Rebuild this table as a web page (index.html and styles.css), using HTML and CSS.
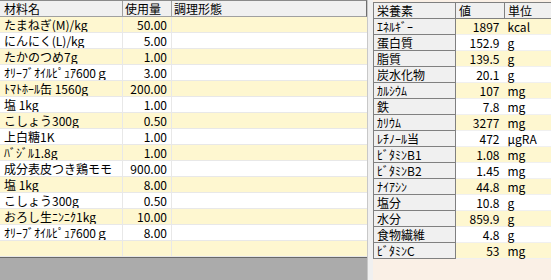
FILE: index.html
```html
<!DOCTYPE html>
<html lang="ja">
<head>
<meta charset="utf-8">
<link rel="stylesheet" href="styles.css">
</head>
<body>
<div class="app">
  <div class="left">
    <div class="grid">
      <div class="row head"><div class="c name">材料名</div><div class="c qty">使用量</div><div class="c form">調理形態</div></div>
      <div class="row y"><div class="c name">たまねぎ(M)/kg</div><div class="c qty">50.00</div><div class="c form"></div></div>
      <div class="row"><div class="c name">にんにく(L)/kg</div><div class="c qty">5.00</div><div class="c form"></div></div>
      <div class="row y"><div class="c name">たかのつめ7g</div><div class="c qty">1.00</div><div class="c form"></div></div>
      <div class="row"><div class="c name">ｵﾘｰﾌﾞｵｲﾙﾋﾟｭｱ600ｇ</div><div class="c qty">3.00</div><div class="c form"></div></div>
      <div class="row y"><div class="c name">ﾄﾏﾄﾎｰﾙ缶 1560g</div><div class="c qty">200.00</div><div class="c form"></div></div>
      <div class="row"><div class="c name">塩 1kg</div><div class="c qty">1.00</div><div class="c form"></div></div>
      <div class="row y"><div class="c name">こしょう300g</div><div class="c qty">0.50</div><div class="c form"></div></div>
      <div class="row"><div class="c name">上白糖1K</div><div class="c qty">1.00</div><div class="c form"></div></div>
      <div class="row y"><div class="c name">ﾊﾞｼﾞﾙ1.8g</div><div class="c qty">1.00</div><div class="c form"></div></div>
      <div class="row"><div class="c name">成分表皮つき鶏モモ</div><div class="c qty">900.00</div><div class="c form"></div></div>
      <div class="row y"><div class="c name">塩 1kg</div><div class="c qty">8.00</div><div class="c form"></div></div>
      <div class="row"><div class="c name">こしょう300g</div><div class="c qty">0.50</div><div class="c form"></div></div>
      <div class="row y"><div class="c name">おろし生ﾆﾝﾆｸ1kg</div><div class="c qty">10.00</div><div class="c form"></div></div>
      <div class="row"><div class="c name">ｵﾘｰﾌﾞｵｲﾙﾋﾟｭｱ600ｇ</div><div class="c qty">8.00</div><div class="c form"></div></div>
      <div class="row y"><div class="c name"></div><div class="c qty"></div><div class="c form"></div></div>
    </div>
    <div class="blank"></div>
  </div>
  <div class="splitter"></div>
  <div class="right">
    <table class="nut">
      <tr class="nhead"><th class="k">栄養素</th><th class="v">値</th><th class="u">単位</th></tr>
      <tr class="y"><th class="k">ｴﾈﾙｷﾞｰ</th><td class="v">1897</td><td class="u">kcal</td></tr>
      <tr><th class="k">蛋白質</th><td class="v">152.9</td><td class="u">g</td></tr>
      <tr class="y"><th class="k">脂質</th><td class="v">139.5</td><td class="u">g</td></tr>
      <tr><th class="k">炭水化物</th><td class="v">20.1</td><td class="u">g</td></tr>
      <tr class="y"><th class="k">ｶﾙｼｳﾑ</th><td class="v">107</td><td class="u">mg</td></tr>
      <tr><th class="k">鉄</th><td class="v">7.8</td><td class="u">mg</td></tr>
      <tr class="y"><th class="k">ｶﾘｳﾑ</th><td class="v">3277</td><td class="u">mg</td></tr>
      <tr><th class="k">ﾚﾁﾉｰﾙ当</th><td class="v">472</td><td class="u">μgRA</td></tr>
      <tr class="y"><th class="k">ﾋﾞﾀﾐﾝB1</th><td class="v">1.08</td><td class="u">mg</td></tr>
      <tr><th class="k">ﾋﾞﾀﾐﾝB2</th><td class="v">1.45</td><td class="u">mg</td></tr>
      <tr class="y"><th class="k">ﾅｲｱｼﾝ</th><td class="v">44.8</td><td class="u">mg</td></tr>
      <tr><th class="k">塩分</th><td class="v">10.8</td><td class="u">g</td></tr>
      <tr class="y"><th class="k">水分</th><td class="v">859.9</td><td class="u">g</td></tr>
      <tr><th class="k">食物繊維</th><td class="v">4.8</td><td class="u">g</td></tr>
      <tr class="y"><th class="k">ﾋﾞﾀﾐﾝC</th><td class="v">53</td><td class="u">mg</td></tr>
    </table>
  </div>
</div>
</body>
</html>
```
FILE: styles.css
```css
html, body {
  margin: 0;
  padding: 0;
}
body {
  width: 551px;
  height: 280px;
  overflow: hidden;
  font-family: "Noto Sans CJK JP", "Noto Sans", sans-serif;
  font-size: 12px;
  color: #000;
  background: #faf0e6;
}
.app {
  display: flex;
  height: 280px;
}
.left {
  width: 367px;
  display: flex;
  flex-direction: column;
  background: #fff;
}
.grid {
  display: flex;
  flex-direction: column;
}
.row {
  display: flex;
  height: 15px;
  border-bottom: 1px solid #e8e8e8;
  background: #fff;
}
.row.y {
  background: #fef7d0;
}
.row.head {
  background: #f0f0f0;
  border-top: 1px solid #8a8a8a;
  border-bottom: 1px solid #a0a0a0;
  border-right: 1px solid #6e6e6e;
}
.c {
  line-height: 15px;
  white-space: nowrap;
  overflow: hidden;
  border-right: 1px solid #e8e8e8;
}
.head .c {
  border-right-color: #a0a0a0;
}
.name {
  width: 118px;
  padding-left: 4px;
}
.qty {
  width: 44px;
  padding-right: 4px;
  text-align: right;
}
.head .qty {
  text-align: left;
  padding-left: 2px;
  width: 42px;
}
.form {
  flex: 1;
  padding-left: 2px;
  border-right: none;
}
.blank {
  flex: 1;
  background: #ababab;
  border-top: 1px solid #696969;
}
.splitter {
  width: 5px;
  background: #f0f0f0;
  border-left: 1px solid #c8c8c8;
}
.right {
  flex: 1;
  padding-top: 2px;
  overflow: hidden;
}
.nut {
  border-collapse: collapse;
  table-layout: fixed;
  width: 180px;
}
.nut th, .nut td {
  height: 15px;
  padding: 0;
  line-height: 15px;
  font-weight: normal;
  white-space: nowrap;
  text-align: left;
}
.nut th {
  background: #f0f0f0;
  border: 1px solid #808080;
}
.nut .k {
  width: 78px;
  padding-left: 3px;
}
.nut .v {
  width: 43px;
  padding-right: 5px;
  text-align: right;
}
.nut .u {
  width: 45px;
  padding-left: 3px;
}
.nut .nhead .v {
  text-align: left;
  padding-left: 3px;
  padding-right: 0;
  width: 45px;
}
.nut td {
  background: #fff;
  border-bottom: 1px solid #f0f0f0;
}
.nut tr.y td {
  background: #fef7d0;
}
```
